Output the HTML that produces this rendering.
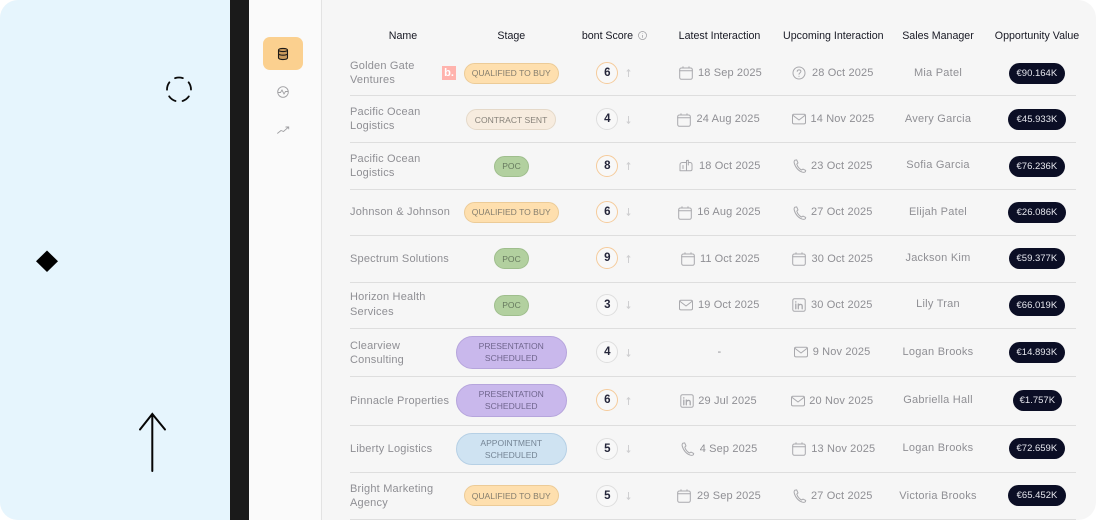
<!DOCTYPE html>
<html><head><meta charset="utf-8"><style>
html,body{margin:0;padding:0;background:#fff}
#w{position:relative;width:1096px;height:520px;overflow:hidden;border-radius:18px;background:#f6f6f6;font-family:"Liberation Sans",sans-serif}
#w>div,#m>div{position:absolute}
#m{position:absolute;left:0;top:0;width:1096px;height:520px;filter:blur(.35px)}
.h{color:#181924;font-size:10.65px;line-height:14px;top:28.500px;text-align:center;white-space:nowrap;width:110px}
.n{left:350px;color:#8f8f94;font-size:11px;line-height:14px;white-space:nowrap;letter-spacing:.2px;margin-top:.5px}
.l{left:350px;width:726px;height:1.4px;background:#dedede}
.b{box-sizing:border-box;border:1px solid;display:flex;align-items:center;justify-content:center;text-align:center;font-size:8.55px;line-height:12px;white-space:nowrap}
.q{left:463.5px;width:95.5px;height:21px;border-radius:11px;background:#fedfae;border-color:#eccb97;color:#857e6e}
.k{left:494px;width:35px;height:21px;border-radius:11px;background:#b2d09f;border-color:#9fbe8d;color:#66795e}
.p{left:455.5px;width:111.5px;height:32.5px;border-radius:17px;background:#c9b8ec;border-color:#b6a5dc;color:#70668e}
.s{left:596.3px;width:22px;height:22px;box-sizing:border-box;border:1px solid #dedede;border-radius:50%;background:#f8f8f8;color:#25263a;font-weight:bold;font-size:11.5px;line-height:20px;text-align:center}
.o{border-color:#f5cb9b}
.d{color:#8f8f94;font-size:11px;line-height:14px;white-space:nowrap;letter-spacing:.14px;margin-top:.5px}
.m{left:878px;width:120px;text-align:center;color:#8f8f94;font-size:11px;line-height:14px;white-space:nowrap;letter-spacing:.25px;margin-top:.3px}
.v{height:21px;left:1008.3px;width:57.4px;border-radius:11px;background:#0b0e25;color:#e6e7ee;font-size:9.5px;line-height:21px;text-align:center}
.v.x{left:1009px;width:55.7px}
svg.i{position:absolute;width:14px;height:14px;fill:none;stroke:#a9a9ad;stroke-width:1;stroke-linecap:round;stroke-linejoin:round}
svg.a{position:absolute;left:625.500px;width:5px;height:8px;margin-top:1px;fill:none;stroke:#cfcfd1;stroke-width:1}
</style></head><body>
<svg width="0" height="0" style="position:absolute"><defs>
<symbol id="cal" viewBox="0 0 14 14"><rect x=".7" y="2" width="12.6" height="11.2" rx="1.6"/><path d="M.7 4.800H13.300M4 .8V2M10 .8V2"/></symbol>
<symbol id="mail" viewBox="0 0 14 14"><rect x=".5" y="2.300" width="13" height="9.600" rx="1.400"/><path d="M1 3.400 7 8l6-4.600"/></symbol>
<symbol id="tel" viewBox="0 0 14 14"><path d="M1.800 1.200 3.700 .9 5 3.900 3.800 5.100C4.600 7.800 6.200 9.800 8.600 11L10 10.100l2.700 1.300-.3 1.300C11.800 13.300 10.600 13.500 9.500 13.200 5.500 12 2.200 8.300 1.200 3.900 1 3 1.200 1.900 1.800 1.200Z"/></symbol>
<symbol id="in" viewBox="0 0 14 14"><rect x=".8" y=".8" width="12.400" height="12.400" rx="1.600"/><path stroke-width="1.300" d="M3.800 6V10.800M3.800 3.800V4.100M6.300 10.800V6M6.300 8C6.300 6.500 10.200 5.300 10.200 8V10.800"/></symbol>
<symbol id="q" viewBox="0 0 14 14"><circle cx="7" cy="7" r="6"/><path d="M5.200 5.400C5.300 3.300 8.900 3.400 8.900 5.400 8.900 6.800 7 6.900 7 8.300M7 10.300V10.400"/></symbol>
<symbol id="bk" viewBox="0 0 14 14"><path d="M7 3.500 3.300 3.500C2 3.500 1 4.500 1 5.800V11.800H11.500C12.400 11.800 13 11.200 13 10.300V5.500C13 4.400 12.200 3.500 11 3.500H9.300M4 6.500V9.500M9.300 1.300 7.500 1.500V11.800M9.300 1.300V6"/></symbol>
<symbol id="up" viewBox="0 0 5 8" overflow="visible"><path d="M2.500 8V.6M.8 2.500 2.500 .6 4.200 2.500"/></symbol>
<symbol id="dn" viewBox="0 0 5 8" overflow="visible"><path d="M2.500 0V7.400M.8 5.500 2.500 7.400 4.200 5.500"/></symbol>
</defs></svg>
<div id="w">
<div style="left:0;top:0;width:230px;height:520px;background:#e6f5fd"></div>
<div style="left:230px;top:0;width:19px;height:520px;background:#1a1a1a"></div>
<div style="left:249px;top:0;width:72px;height:520px;background:#fafafa;border-right:1.200px solid #e3e3e3"></div>

<svg style="position:absolute;left:160px;top:70px" width="40" height="40" fill="none"><circle cx="19" cy="19.500" r="12" stroke="#0a0a0a" stroke-width="1.800" stroke-linecap="round" pathLength="100" stroke-dasharray="10.500 9.500" transform="rotate(-109 19 19.500)"/></svg>
<svg style="position:absolute;left:30px;top:244px" width="34" height="34"><path d="M17 6.500 28 17.300 17 28 6 17.300Z" fill="#000"/></svg>
<svg style="position:absolute;left:130px;top:405px" width="44" height="72" fill="none" stroke="#050505" stroke-width="2" stroke-linecap="round"><path d="M22.300 66V9M10 24.500 22.300 9 35 24.500"/></svg>

<div style="left:263px;top:37px;width:40px;height:33px;border-radius:7px;background:#fbd08f"></div>
<svg style="position:absolute;left:276px;top:47px" width="14" height="14" viewBox="0 0 14 14" fill="#c99a5c" stroke="#1d1a17" stroke-width="1.100"><path d="M2.500 3.200C2.500 .9 11.500 .9 11.500 3.200V10.800C11.500 13.100 2.500 13.100 2.500 10.800Z"/><path fill="none" d="M2.500 3.400C4 5 10 5 11.500 3.400M2.500 7C4 8.600 10 8.600 11.500 7"/></svg>
<svg style="position:absolute;left:276px;top:84.500px" width="14" height="14" viewBox="0 0 14 14" fill="none" stroke="#a0a0a3" stroke-width=".9"><circle cx="7" cy="7" r="5.300"/><path d="M2 7.500H4.500L6 5 8 9 9.500 6.500H12"/></svg>
<svg style="position:absolute;left:276px;top:123px" width="14" height="14" viewBox="0 0 14 14" fill="none" stroke="#a0a0a3" stroke-width=".9"><path d="M1.300 10.500 5 7.500 7.500 8.500 12.500 4M9.500 4H12.700V6.300"/></svg>

<div id="m">
<div class="h" style="left:348px">Name</div>
<div class="h" style="left:456.300px">Stage</div>
<div class="h" style="left:552.500px;letter-spacing:-.03px">bont Score</div>
<svg style="position:absolute;left:638px;top:30.500px" width="9" height="9" viewBox="0 0 9 9" fill="none" stroke="#9a9a9e" stroke-width=".7"><circle cx="4.500" cy="4.500" r="4"/><path d="M4.500 4V6.800M4.500 2.300V2.800"/></svg>
<div class="h" style="left:664.500px">Latest Interaction</div>
<div class="h" style="left:778.300px">Upcoming Interaction</div>
<div class="h" style="left:883px">Sales Manager</div>
<div class="h" style="left:982px">Opportunity Value</div>

<div class="l" style="top:95px"></div><div class="l" style="top:142px"></div><div class="l" style="top:188.500px"></div><div class="l" style="top:235px"></div><div class="l" style="top:282px"></div><div class="l" style="top:327.500px"></div><div class="l" style="top:376px"></div><div class="l" style="top:425px"></div><div class="l" style="top:472px"></div><div class="l" style="top:518.800px"></div>

<!-- row 1 -->
<div class="n" style="top:58px">Golden Gate<br>Ventures</div>
<div style="left:442px;top:65.500px;width:14px;height:14px;background:#ffb3ad;color:#fff;font-weight:bold;font-size:11px;line-height:14px;text-align:center">b.</div>
<div class="b q" style="top:62.500px">QUALIFIED TO BUY</div>
<div class="s o" style="top:61.500px">6</div><svg class="a" style="top:68px"><use href="#up"/></svg>
<svg class="i" style="left:679px;top:66px"><use href="#cal"/></svg><div class="d" style="left:698px;top:65px">18 Sep 2025</div>
<svg class="i" style="left:792px;top:66px"><use href="#q"/></svg><div class="d" style="left:812px;top:65px">28 Oct 2025</div>
<div class="m" style="top:65.500px">Mia Patel</div><div class="v x" style="top:62.500px">€90.164K</div>

<!-- row 2 -->
<div class="n" style="top:104.500px">Pacific Ocean<br>Logistics</div>
<div class="b" style="left:466.300px;width:89.500px;height:21px;top:109px;border-radius:11px;background:#f7ecdf;border-color:#e5d9c9;color:#87827a">CONTRACT SENT</div>
<div class="s" style="top:108px">4</div><svg class="a" style="top:115px"><use href="#dn"/></svg>
<svg class="i" style="left:677px;top:113px"><use href="#cal"/></svg><div class="d" style="left:696.500px;top:111.500px">24 Aug 2025</div>
<svg class="i" style="left:792px;top:112px"><use href="#mail"/></svg><div class="d" style="left:810.500px;top:111.500px">14 Nov 2025</div>
<div class="m" style="top:111.500px">Avery Garcia</div><div class="v" style="top:109px">€45.933K</div>

<!-- row 3 -->
<div class="n" style="top:151px">Pacific Ocean<br>Logistics</div>
<div class="b k" style="top:155.800px">POC</div>
<div class="s o" style="top:155px">8</div><svg class="a" style="top:161px"><use href="#up"/></svg>
<svg class="i" style="left:679px;top:159px"><use href="#bk"/></svg><div class="d" style="left:699px;top:158px">18 Oct 2025</div>
<svg class="i" style="left:792.500px;top:159px"><use href="#tel"/></svg><div class="d" style="left:811px;top:158px">23 Oct 2025</div>
<div class="m" style="top:158px">Sofia Garcia</div><div class="v x" style="top:155.800px">€76.236K</div>

<!-- row 4 -->
<div class="n" style="top:204.500px">Johnson &amp; Johnson</div>
<div class="b q" style="top:201.500px">QUALIFIED TO BUY</div>
<div class="s o" style="top:201px">6</div><svg class="a" style="top:207px"><use href="#dn"/></svg>
<svg class="i" style="left:678px;top:205.500px"><use href="#cal"/></svg><div class="d" style="left:697.300px;top:204.500px">16 Aug 2025</div>
<svg class="i" style="left:792.500px;top:205.500px"><use href="#tel"/></svg><div class="d" style="left:811px;top:204.500px">27 Oct 2025</div>
<div class="m" style="top:204.500px">Elijah Patel</div><div class="v" style="top:201.500px">€26.086K</div>

<!-- row 5 -->
<div class="n" style="top:251px">Spectrum Solutions</div>
<div class="b k" style="top:248px">POC</div>
<div class="s o" style="top:247px">9</div><svg class="a" style="top:253.500px"><use href="#up"/></svg>
<svg class="i" style="left:680.500px;top:252px"><use href="#cal"/></svg><div class="d" style="left:700px;top:251px;letter-spacing:.05px">11 Oct 2025</div>
<svg class="i" style="left:792px;top:252px"><use href="#cal"/></svg><div class="d" style="left:811.500px;top:251px">30 Oct 2025</div>
<div class="m" style="top:251px">Jackson Kim</div><div class="v x" style="top:248px">€59.377K</div>

<!-- row 6 -->
<div class="n" style="top:289.800px;line-height:14.800px">Horizon Health<br>Services</div>
<div class="b k" style="top:294.500px">POC</div>
<div class="s" style="top:294px">3</div><svg class="a" style="top:300px"><use href="#dn"/></svg>
<svg class="i" style="left:679px;top:298px"><use href="#mail"/></svg><div class="d" style="left:698px;top:297px">19 Oct 2025</div>
<svg class="i" style="left:792px;top:298px"><use href="#in"/></svg><div class="d" style="left:811px;top:297px">30 Oct 2025</div>
<div class="m" style="top:297px">Lily Tran</div><div class="v x" style="top:294.500px">€66.019K</div>

<!-- row 7 -->
<div class="n" style="top:338px">Clearview<br>Consulting</div>
<div class="b p" style="top:336px">PRESENTATION<br>SCHEDULED</div>
<div class="s" style="top:341px">4</div><svg class="a" style="top:347.500px"><use href="#dn"/></svg>
<div class="d" style="left:717.500px;top:344.500px">-</div>
<svg class="i" style="left:794px;top:345px"><use href="#mail"/></svg><div class="d" style="left:812.700px;top:344.500px">9 Nov 2025</div>
<div class="m" style="top:344.500px">Logan Brooks</div><div class="v x" style="top:342px">€14.893K</div>

<!-- row 8 -->
<div class="n" style="top:393px">Pinnacle Properties</div>
<div class="b p" style="top:384px">PRESENTATION<br>SCHEDULED</div>
<div class="s o" style="top:389px">6</div><svg class="a" style="top:395.500px"><use href="#up"/></svg>
<svg class="i" style="left:680px;top:393.500px"><use href="#in"/></svg><div class="d" style="left:698.300px;top:393px">29 Jul 2025</div>
<svg class="i" style="left:791px;top:394px"><use href="#mail"/></svg><div class="d" style="left:809.300px;top:393px">20 Nov 2025</div>
<div class="m" style="top:393px">Gabriella Hall</div><div class="v" style="top:390px;left:1013px;width:48.700px">€1.757K</div>

<!-- row 9 -->
<div class="n" style="top:441px">Liberty Logistics</div>
<div class="b p" style="top:432.700px;background:#cfe3f2;border-color:#b6d0e5;color:#758595">APPOINTMENT<br>SCHEDULED</div>
<div class="s" style="top:437.500px">5</div><svg class="a" style="top:444px"><use href="#dn"/></svg>
<svg class="i" style="left:681px;top:441.500px"><use href="#tel"/></svg><div class="d" style="left:699.700px;top:441px">4 Sep 2025</div>
<svg class="i" style="left:792px;top:442px"><use href="#cal"/></svg><div class="d" style="left:811.300px;top:441px">13 Nov 2025</div>
<div class="m" style="top:441px">Logan Brooks</div><div class="v x" style="top:438px">€72.659K</div>

<!-- row 10 -->
<div class="n" style="top:481px">Bright Marketing<br>Agency</div>
<div class="b q" style="top:485.300px">QUALIFIED TO BUY</div>
<div class="s" style="top:485px">5</div><svg class="a" style="top:491px"><use href="#dn"/></svg>
<svg class="i" style="left:677px;top:489.300px"><use href="#cal"/></svg><div class="d" style="left:697px;top:488.500px">29 Sep 2025</div>
<svg class="i" style="left:792.500px;top:489.300px"><use href="#tel"/></svg><div class="d" style="left:811px;top:488.500px">27 Oct 2025</div>
<div class="m" style="top:488.500px">Victoria Brooks</div><div class="v" style="top:485px">€65.452K</div>
</div>
</div>
</body></html>
